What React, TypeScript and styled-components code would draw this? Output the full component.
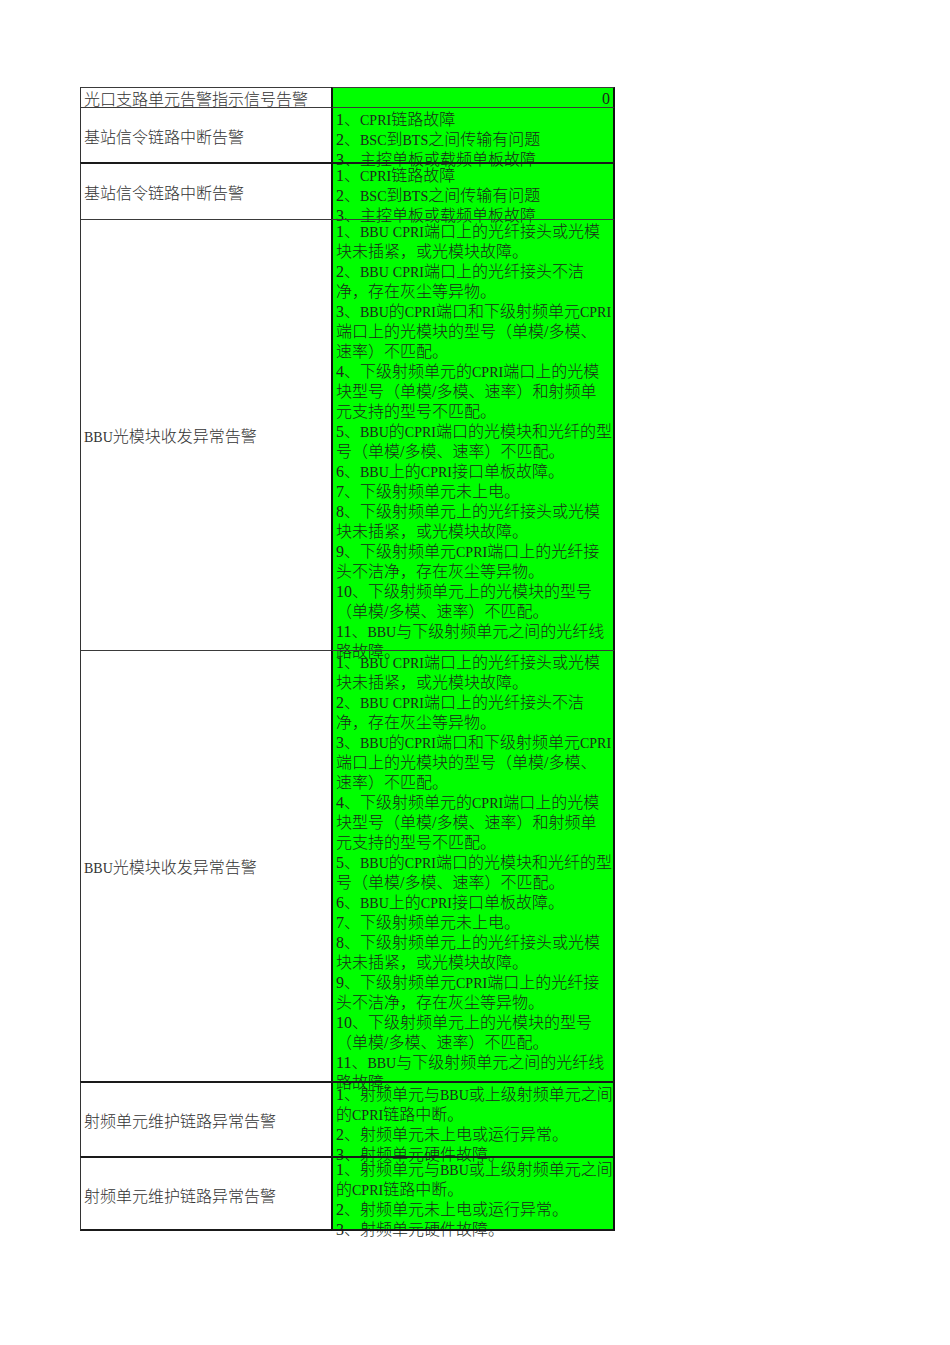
import styled, { createGlobalStyle } from 'styled-components';

const GlobalStyle = createGlobalStyle`
    html, body {
        margin: 0;
        padding: 0;
        background: #ffffff;
    }
    body {
        font-family: 'Liberation Serif', 'Noto Sans CJK SC', serif;
    }
`;

type T_Row = {
    height: number;
    label: string;
    lines: string[];
    heavy?: boolean;
    number?: string;
};

const bbuLines = [
    '1、BBU CPRI端口上的光纤接头或光模',
    '块未插紧，或光模块故障。',
    '2、BBU CPRI端口上的光纤接头不洁',
    '净，存在灰尘等异物。',
    '3、BBU的CPRI端口和下级射频单元CPRI',
    '端口上的光模块的型号（单模/多模、',
    '速率）不匹配。',
    '4、下级射频单元的CPRI端口上的光模',
    '块型号（单模/多模、速率）和射频单',
    '元支持的型号不匹配。',
    '5、BBU的CPRI端口的光模块和光纤的型',
    '号（单模/多模、速率）不匹配。',
    '6、BBU上的CPRI接口单板故障。',
    '7、下级射频单元未上电。',
    '8、下级射频单元上的光纤接头或光模',
    '块未插紧，或光模块故障。',
    '9、下级射频单元CPRI端口上的光纤接',
    '头不洁净，存在灰尘等异物。',
    '10、下级射频单元上的光模块的型号',
    '（单模/多模、速率）不匹配。',
    '11、BBU与下级射频单元之间的光纤线',
    '路故障。',
];

const linkLines = [
    '1、CPRI链路故障',
    '2、BSC到BTS之间传输有问题',
    '3、主控单板或载频单板故障',
];

const rfLines = [
    '1、射频单元与BBU或上级射频单元之间',
    '的CPRI链路中断。',
    '2、射频单元未上电或运行异常。',
    '3、射频单元硬件故障。',
];

const rows: T_Row[] = [
    { height: 20, label: '光口支路单元告警指示信号告警', lines: [], number: '0' },
    { height: 56, label: '基站信令链路中断告警', lines: linkLines },
    { height: 56, label: '基站信令链路中断告警', lines: linkLines, heavy: true },
    { height: 431, label: 'BBU光模块收发异常告警', lines: bbuLines },
    { height: 432, label: 'BBU光模块收发异常告警', lines: bbuLines },
    { height: 75, label: '射频单元维护链路异常告警', lines: rfLines, heavy: true },
    { height: 74, label: '射频单元维护链路异常告警', lines: rfLines, heavy: true },
];

// uppercase latin runs are set a bit smaller so they take half-width cells like the original sheet font
const renderText = (text: string) =>
    text.split(/([A-Z]+)/).map((part, i) =>
        /^[A-Z]+$/.test(part) ? <Latin key={i}>{part}</Latin> : part
    );

export default function App() {
    return (
        <>
            <GlobalStyle />
            <Page>
                <Sheet style={{ gridTemplateRows: rows.map((r) => r.height + 'px').join(' ') }}>
                    {rows.map((row, i) => {
                        const last = i === rows.length - 1;
                        return [
                            <Cell key={'l' + i}>
                                <Label>{renderText(row.label)}</Label>
                                <Frame $heavy={row.heavy} $last={last} $side="left" />
                            </Cell>,
                            <Cell key={'r' + i} $green>
                                {row.number !== undefined ? (
                                    <NumberText>{row.number}</NumberText>
                                ) : (
                                    <Lines>
                                        {row.lines.map((line, j) => (
                                            <Line key={j}>{renderText(line)}</Line>
                                        ))}
                                    </Lines>
                                )}
                                <Frame $heavy={row.heavy} $last={last} $side="right" />
                            </Cell>,
                        ];
                    })}
                </Sheet>
            </Page>
        </>
    );
}

const Page = styled.div`
    width: 950px;
    min-height: 1345px;
    padding: 87px 0 0 80px;
    box-sizing: border-box;
`;

const Sheet = styled.div`
    display: grid;
    grid-template-columns: 251px 284px;
    width: 535px;
`;

const Cell = styled.div<{ $green?: boolean }>`
    display: grid;
    grid-template-rows: minmax(0, 1fr);
    grid-template-columns: minmax(0, 1fr);
    min-height: 0;
    background: ${(p) => (p.$green ? '#00ff00' : '#ffffff')};
    color: ${(p) => (p.$green ? '#1c2a1c' : '#333333')};
    font-size: 16px;
    line-height: 20px;
    font-weight: 300;
`;

const Latin = styled.span`
    font-size: 14px;
`;

/* text layers sit above every cell background so overflow shows across rows */
const Label = styled.div`
    grid-area: 1 / 1;
    align-self: center;
    padding: 5px 0 0 4px;
    white-space: nowrap;
    position: relative;
    z-index: 1;
`;

const NumberText = styled.div`
    grid-area: 1 / 1;
    align-self: center;
    text-align: right;
    padding: 4px 5px 0 0;
    position: relative;
    z-index: 1;
`;

const Lines = styled.div`
    grid-area: 1 / 1;
    align-self: start;
    padding: 3px 0 0 5px;
    display: flex;
    flex-direction: column;
    position: relative;
    z-index: 1;
`;

const Line = styled.div`
    height: 20px;
    white-space: pre;
`;

/* cell rules are drawn over the text, as in the exported sheet */
const Frame = styled.div<{ $heavy?: boolean; $last?: boolean; $side: 'left' | 'right' }>`
    grid-area: 1 / 1;
    position: relative;
    z-index: 2;
    pointer-events: none;
    border-top: ${(p) => (p.$heavy ? '2px solid #1a1a1a' : '1px solid #3a3a3a')};
    border-left: ${(p) => (p.$side === 'left' ? '1px solid #333333' : '2px solid #111111')};
    border-right: ${(p) => (p.$side === 'right' ? '2px solid #111111' : 'none')};
    border-bottom: ${(p) => (p.$last ? '2px solid #1a1a1a' : 'none')};
    margin-top: ${(p) => (p.$heavy ? '-1px' : '0')};
`;
